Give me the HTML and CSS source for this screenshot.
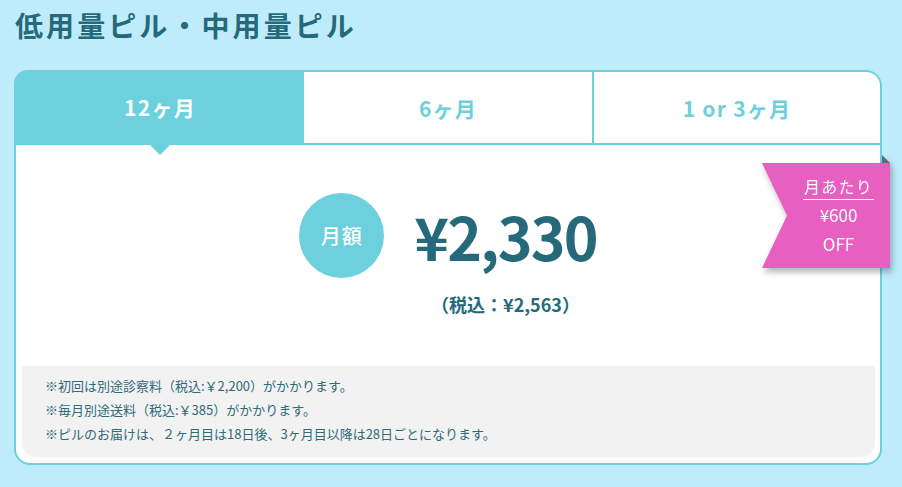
FILE: index.html
```html
<!DOCTYPE html>
<html lang="ja">
<head>
  <meta charset="UTF-8">
  <title>低用量ピル・中用量ピル</title>
  <link rel="stylesheet" href="styles.css">
</head>
<body>
  <div class="page">
    <h2 class="title">低用量ピル・中用量ピル</h2>

    <div class="plan-card">
      <div class="tabs">
        <div class="tab active">12ヶ月</div>
        <div class="tab">6ヶ月</div>
        <div class="tab last">1 or 3ヶ月</div>
      </div>

      <div class="price-area">
        <div class="badge">月額</div>
        <div class="price-col">
          <div class="price">¥2,330</div>
          <div class="tax">（税込：¥2,563）</div>
        </div>
      </div>

      <div class="notes">
        <p>※初回は別途診察料（税込:￥2,200）がかかります。</p>
        <p>※毎月別途送料（税込:￥385）がかかります。</p>
        <p>※ピルのお届けは、２ヶ月目は18日後、3ヶ月目以降は28日ごとになります。</p>
      </div>

      <!-- discount ribbon -->
      <div class="ribbon">
        <span class="fold"></span>
        <div class="ribbon-body">
          <span class="per">月あたり</span>
          <span>¥600</span>
          <span>OFF</span>
        </div>
      </div>
    </div>
  </div>
</body>
</html>
```

FILE: styles.css
```css
body {
  margin: 0;
  background-color: #bfecfb;
  font-family: "Noto Sans CJK JP", "Noto Sans", sans-serif;
  color: #25697b;
}

.page {
  padding: 6px 20px 0 14px;
}

.title {
  margin: 0 0 26px 1px;
  font-size: 28px;
  line-height: 38px;
  font-weight: 700;
  letter-spacing: 0.11em;
  color: #25697b;
}

.plan-card {
  position: relative;
  width: 864px;
  border: 2px solid #6cd1dc;
  border-radius: 16px;
  background-color: #fff;
}

.tabs {
  display: grid;
  grid-template-columns: 1fr 1fr 1fr;
  border-radius: 14px 14px 0 0;
}

.tab {
  position: relative;
  height: 71px;
  display: flex;
  align-items: center;
  justify-content: center;
  border-bottom: 2px solid #6cd1dc;
  font-size: 21px;
  font-weight: 700;
  letter-spacing: 0.06em;
  color: #6cd1dc;
}

.tab.active {
  background-color: #6cd1dc;
  color: #fff;
  border-radius: 14px 0 0 0;
  margin: -2px 0 0 -2px;
  height: 73px;
  padding-left: 2px;
}

.tab.active::after {
  content: "";
  position: absolute;
  left: 50%;
  top: 100%;
  margin-left: -11px;
  border-left: 12px solid transparent;
  border-right: 12px solid transparent;
  border-top: 12px solid #6cd1dc;
}

.tab.last {
  border-left: 2px solid #6cd1dc;
}

.price-area {
  height: 221px;
  box-sizing: border-box;
  padding-top: 48px;
  display: flex;
  justify-content: center;
  align-items: flex-start;
  gap: 30px;
}

.badge {
  width: 85px;
  height: 85px;
  border-radius: 50%;
  background-color: #6cd1dc;
  color: #fff;
  font-size: 20px;
  font-weight: 500;
  letter-spacing: 0.05em;
  display: flex;
  align-items: center;
  justify-content: center;
}

.price-col {
  display: flex;
  flex-direction: column;
  align-items: center;
}

.price {
  font-size: 59px;
  font-weight: 700;
  line-height: 85px;
  letter-spacing: -0.03em;
  color: #25697b;
}

.tax {
  margin-top: 13px;
  font-size: 18px;
  line-height: 26px;
  font-weight: 700;
  color: #25697b;
}

.notes {
  margin: 0 5px 6px 6px;
  padding: 8px 23px 11px;
  background-color: #f2f2f2;
  border-radius: 0 0 14px 14px;
}

.notes p {
  margin: 0;
  font-size: 13px;
  line-height: 24px;
  color: #2f6b79;
}

.ribbon {
  position: absolute;
  left: 746px;
  top: 83px;
  filter: drop-shadow(2px 4px 3px rgba(0, 0, 0, 0.3));
}

.fold {
  display: block;
  margin-left: 120px;
  width: 0;
  height: 0;
  border-left: 8px solid transparent;
  border-bottom: 8px solid #56707a;
  transform: scaleX(-1);
}

.ribbon-body {
  width: 128px;
  height: 105px;
  box-sizing: border-box;
  padding: 11px 0 0 25px;
  background-color: #e85fc2;
  clip-path: polygon(0 0, 100% 0, 100% 100%, 0 100%, 25px 50%);
  display: flex;
  flex-direction: column;
  align-items: center;
  color: #fff;
  font-size: 17px;
  line-height: 29px;
}

.ribbon-body .per {
  font-size: 16px;
  line-height: 24px;
  padding: 0 1px 1px;
  border-bottom: 1px solid #fff;
  letter-spacing: 0.08em;
}
```
